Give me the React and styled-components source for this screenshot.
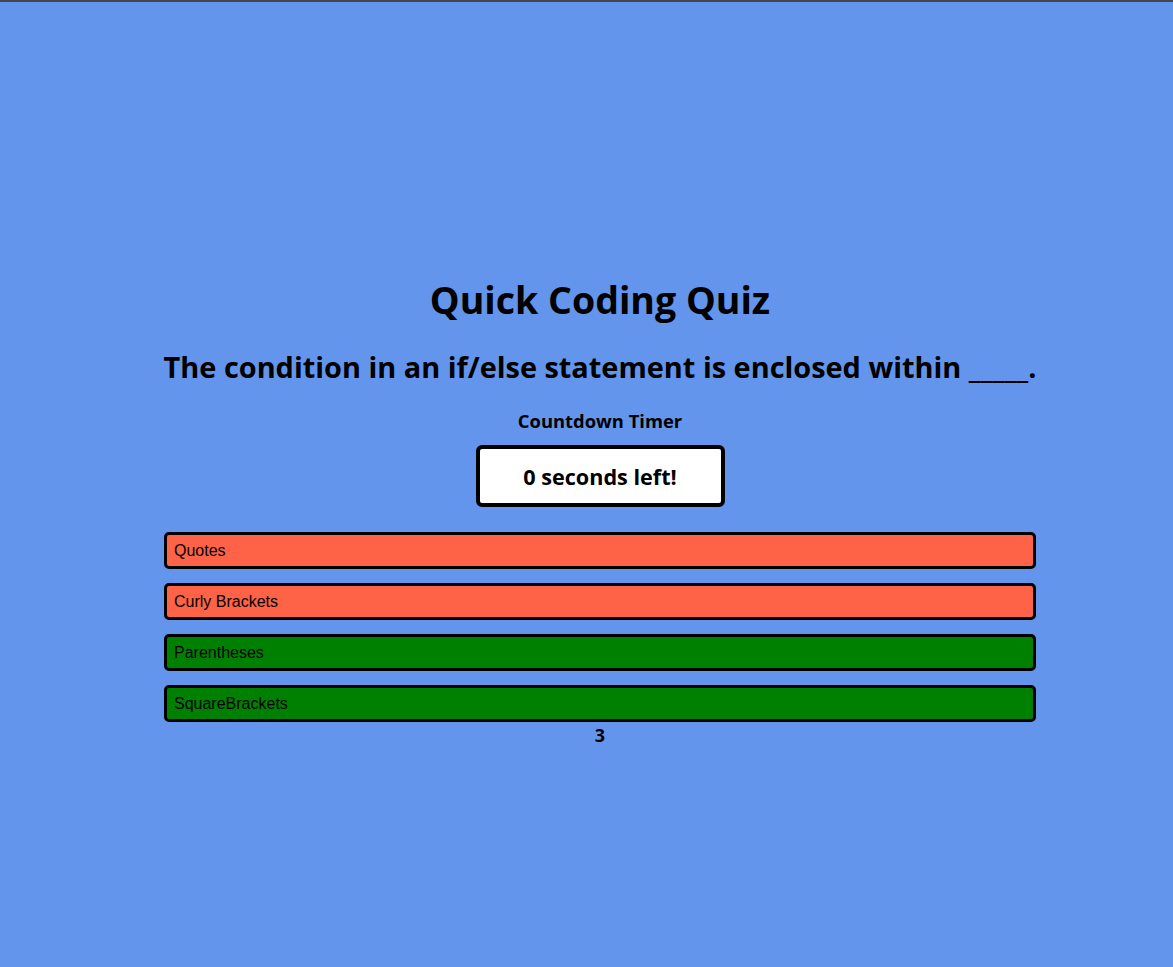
import React from 'react';
import styled, { createGlobalStyle } from 'styled-components';

const GlobalStyle = createGlobalStyle`
  html, body {
    margin: 0;
    padding: 0;
    background: #6495ed;
  }
  body {
    min-height: 967px;
    border-top: 2px solid #46464e;
    box-sizing: border-box;
  }
`;

const answers = [
  { text: 'Quotes', right: false },
  { text: 'Curly Brackets', right: false },
  { text: 'Parentheses', right: true },
  { text: 'SquareBrackets', right: true },
];

const App = () => {
  return (
    <>
      <GlobalStyle />
      <Quiz>
        <Title>Quick Coding Quiz</Title>
        <Question>The condition in an if/else statement is enclosed within _____.</Question>
        <TimerLabel>Countdown Timer</TimerLabel>
        <TimerBox>0 seconds left!</TimerBox>
        <Answers>
          {answers.map((a) => (
            <Answer key={a.text} $right={a.right}>
              {a.text}
            </Answer>
          ))}
        </Answers>
        <Score>3</Score>
      </Quiz>
    </>
  );
};

const Quiz = styled.main`
  width: 872px;
  margin-left: 164px;
  padding-top: 274px;
  display: flex;
  flex-direction: column;
  align-items: center;
  font-family: 'Open Sans', 'Lato', sans-serif;
  color: #000;
`;

const Title = styled.h1`
  margin: 0;
  font-size: 37.5px;
  line-height: 48px;
  font-weight: 700;
`;

const Question = styled.h2`
  margin: 25px 0 0;
  font-size: 28.9px;
  line-height: 36px;
  font-weight: 700;
  white-space: nowrap;
`;

const TimerLabel = styled.div`
  margin-top: 24px;
  font-size: 18.4px;
  line-height: 24px;
  font-weight: 700;
`;

const TimerBox = styled.div`
  margin-top: 12px;
  box-sizing: border-box;
  width: 249px;
  height: 62px;
  display: flex;
  align-items: center;
  justify-content: center;
  background: #fff;
  border: 4px solid #000;
  border-radius: 6px;
  font-size: 21.6px;
  font-weight: 700;
`;

const Answers = styled.div`
  margin-top: 25px;
  width: 100%;
  display: flex;
  flex-direction: column;
  gap: 14px;
`;

const Answer = styled.button`
  box-sizing: border-box;
  width: 100%;
  height: 37px;
  padding: 0 0 0 7px;
  text-align: left;
  background: ${(p) => (p.$right ? '#008000' : '#ff6347')};
  border: 3px solid #000;
  border-radius: 5px;
  font-family: 'Liberation Sans', Arial, sans-serif;
  font-size: 16px;
  color: #000;
  cursor: pointer;
`;

const Score = styled.div`
  margin-top: 2px;
  font-size: 18px;
  line-height: 22px;
  font-weight: 700;
`;

export default App;
